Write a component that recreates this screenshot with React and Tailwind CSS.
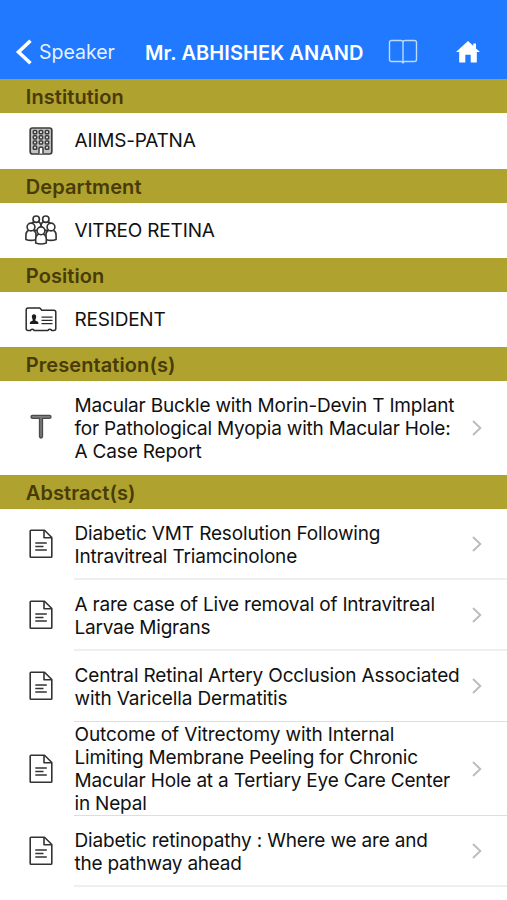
import React from "react";

const Building = () => (
  <svg width="24" height="28" viewBox="0 0 24 28" fill="none" stroke="#3c3c3c">
    <rect x="1.2" y="1" width="21.6" height="26" rx="2.2" fill="#c4c4c4" strokeWidth="1.7" />
    {[5, 10.2, 15.4, 20.6].map((y) =>
      [6, 12, 18].map((x) =>
        y > 20 && x === 12 ? null : (
          <rect key={`${x}-${y}`} x={x - 1.7} y={y - 1.5} width="3.4" height="3.2" rx="0.8" fill="#e4e4e4" strokeWidth="1.5" />
        )
      )
    )}
    <path d="M10 26.5v-5.3q0-1.2 2-1.2t2 1.2v5.3" fill="#fff" strokeWidth="1.5" />
  </svg>
);

const Person = ({ x, y, r, w, h }) => (
  <>
    <path d={`M${x - w} ${y + r + h - 1}v-${h / 2 - 1}q0-${h / 2 + 1} ${w}-${h / 2 + 1}t${w} ${h / 2 + 1}v${h / 2 - 1}q-${w} 2-${2 * w} 0z`} />
    <circle cx={x} cy={y} r={r} />
  </>
);

const People = () => (
  <svg width="32" height="30" viewBox="0 0 32 30" fill="#fff" stroke="#333" strokeWidth="1.6" strokeLinejoin="round">
    <Person x={11.2} y={4.2} r={3.2} w={4.8} h={8} />
    <Person x={20.8} y={4.2} r={3.2} w={4.8} h={8} />
    <Person x={6} y={12} r={3.9} w={5.1} h={9.5} />
    <Person x={26} y={12} r={3.9} w={5.1} h={9.5} />
    <Person x={16} y={15.8} r={3.9} w={5.3} h={9.3} />
  </svg>
);

const Card = () => (
  <svg width="32" height="25" viewBox="0 0 32 25" fill="none" stroke="#2b2b2b" strokeWidth="1.5" strokeLinejoin="round">
    <path d="M1.200 3q0-2 2-2h11.600l2 2.300h12q2 0 2 2v16.200q0 2-2 2h-2.300q0-1.300-1.700-1.300t-1.700 1.300H9q0-1.300-1.700-1.300t-1.700 1.300H3.200q-2 0-2-2z" />
    <path d="M16.500 10.200h11M16.500 13.400h11M16.500 16.600h11" strokeWidth="1.300" />
    <path d="M9 7.200c1.700 0 2.500 1.300 2.200 3.100-.2 1.300-.8 1.900-.9 3.200l2.600 1.200q.5.400.5 2.300H4.800q0-1.900.5-2.300l2.500-1.200c-.1-1.300-.7-1.900-.9-3.200C6.500 8.500 7.400 7.200 9 7.200z" fill="#1c1c1c" stroke="none" />
  </svg>
);

const TBar = () => (
  <svg className="mb-[3px]" width="22" height="25" viewBox="0 0 22 25" stroke="#4a4a4a" strokeLinecap="round">
    <path d="M2.500 2.900h17M11 3v19.500" strokeWidth="4.300" fill="none" />
    <path d="M2.500 2.900h17M11 3.200v19" stroke="#7c7c7c" strokeWidth="1.600" fill="none" />
  </svg>
);

const Doc = () => (
  <svg className="mb-[1px]" width="24" height="30" viewBox="0 0 24 30" fill="none" stroke="#333" strokeWidth="1.600" strokeLinejoin="round">
    <path d="M1.200 2q0-.8.8-.8h13.500l7.300 7.300v19q0 .8-.8.800H2q-.8 0-.8-.8z" />
    <path d="M15 1.500v7.300h7.500" />
    <path d="M6.300 14h11.500M6.300 17.500h8.200M6.300 21h11.500" strokeWidth="1.500" />
  </svg>
);

const Chevron = () => (
  <svg className="mr-[24px] shrink-0" width="12" height="18" viewBox="0 0 12 18" fill="none" stroke="#bdbdc0" strokeWidth="2">
    <path d="M2 2l7.300 7L2 16" />
  </svg>
);

const Section = ({ children }) => (
  <h2 className="h-[34px] shrink-0 bg-[#afa22f] pl-[25.800px] text-[20px] font-semibold leading-[36px] tracking-[0.08px] text-[#483b07]">
    {children}
  </h2>
);

const Row = ({ icon, lines, height, chevron, border = "", pad = "pt-[1px]" }) => (
  <div className={`flex shrink-0 items-stretch ${height}`}>
    <div className="flex w-[74px] shrink-0 items-center justify-center pl-[7px]">{icon}</div>
    <div className={`flex grow items-center justify-between ${border}`}>
      <div className={`whitespace-nowrap pl-[0.5px] text-[19px] leading-[23.200px] text-[#111] ${pad}`}>
        {lines.map(([text, spacing]) => (
          <div key={text} className={spacing}>{text}</div>
        ))}
      </div>
      {chevron && <Chevron />}
    </div>
  </div>
);

const thin = "border-b border-[#dedee0]";
const soft = "border-b-2 border-[#efeff0]";

const abstracts = [
  {
    height: "h-[71px]",
    border: soft,
    pad: "pt-[3px]",
    lines: [["Diabetic VMT Resolution Following", "tracking-[-0.15px]"], ["Intravitreal Triamcinolone", "tracking-[-0.18px]"]],
  },
  {
    height: "h-[71px]",
    border: soft,
    pad: "pt-[3px]",
    lines: [["A rare case of Live removal of Intravitreal", "tracking-[-0.2px]"], ["Larvae Migrans", "tracking-[-0.24px]"]],
  },
  {
    height: "h-[71px]",
    border: thin,
    pad: "pt-[2px]",
    lines: [["Central Retinal Artery Occlusion Associated", "tracking-[-0.14px]"], ["with Varicella Dermatitis", "tracking-[-0.13px]"]],
  },
  {
    height: "h-[94px]",
    border: thin,
    pad: "pt-[1px]",
    lines: [
      ["Outcome of Vitrectomy with Internal", "tracking-[-0.11px]"],
      ["Limiting Membrane Peeling for Chronic", "tracking-[-0.17px]"],
      ["Macular Hole at a Tertiary Eye Care Center", "tracking-[-0.18px]"],
      ["in Nepal", "tracking-[-0.2px]"],
    ],
  },
  {
    height: "h-[71px]",
    border: soft,
    pad: "pt-[3px]",
    lines: [["Diabetic retinopathy : Where we are and", "tracking-[-0.17px]"], ["the pathway ahead", "tracking-[-0.24px]"]],
  },
];

export default function App() {
  return (
    <main className="flex h-[900px] w-[507px] flex-col overflow-hidden bg-white font-['Inter',sans-serif]">
      <header className="flex h-[79px] shrink-0 items-center bg-[#2079ff] pt-[25px] text-white">
        <svg className="ml-[15px] shrink-0" width="18" height="26" viewBox="0 0 18 26" fill="none" stroke="#fff" strokeWidth="3.600">
          <path d="M15.500 1.700L3.500 13l12 11.300" />
        </svg>
        <span className="ml-[6px] w-[106px] shrink-0 whitespace-nowrap pt-[2px] text-[19.500px] text-[#e6f1ff]">Speaker</span>
        <h1 className="w-[243px] shrink-0 whitespace-nowrap pt-[2px] text-[20px] font-semibold tracking-[0.07px]">Mr. ABHISHEK ANAND</h1>
        <svg className="shrink-0" width="30" height="26" viewBox="0 0 30 26" fill="none" stroke="#b9dcff" strokeWidth="1.400">
          <path d="M15 24.500V3q-.3-1.500-2-1.500H3.500q-2 0-2 2v17q0 2 2 2H13q2 0 2 2 0-2 2-2h9.500q2 0 2-2v-17q0-2-2-2H17q-1.700 0-2 1.500" />
        </svg>
        <svg className="ml-[38px] shrink-0" width="24" height="22" viewBox="0 0 24 22" fill="#fff">
          <path d="M12 0l5.200 4.800V2.600h2.800v4.800L24 11.100h-3.200V21.500h-6.100v-7.700H9.300v7.700H3.200V11.100H0z" />
        </svg>
      </header>
      <Section>Institution</Section>
      <Row height="h-[56px] pb-[1px]" icon={<Building />} lines={[["AIIMS-PATNA", "tracking-[-0.2px]"]]} />
      <Section>Department</Section>
      <Row height="h-[55px] pb-[1px]" icon={<People />} lines={[["VITREO RETINA", "tracking-[-0.17px]"]]} />
      <Section>Position</Section>
      <Row height="h-[55px]" icon={<Card />} lines={[["RESIDENT", "tracking-[-0.2px]"]]} />
      <Section>Presentation(s)</Section>
      <Row
        height="h-[94px]"
        icon={<TBar />}
        chevron
        lines={[
          ["Macular Buckle with Morin-Devin T Implant", "tracking-[-0.18px]"],
          ["for Pathological Myopia with Macular Hole:", "tracking-[-0.2px]"],
          ["A Case Report", "tracking-[-0.17px]"],
        ]}
      />
      <Section>Abstract(s)</Section>
      {abstracts.map((a) => (
        <Row key={a.lines[0][0]} height={a.height} icon={<Doc />} lines={a.lines} border={a.border} pad={a.pad} chevron />
      ))}
    </main>
  );
}
